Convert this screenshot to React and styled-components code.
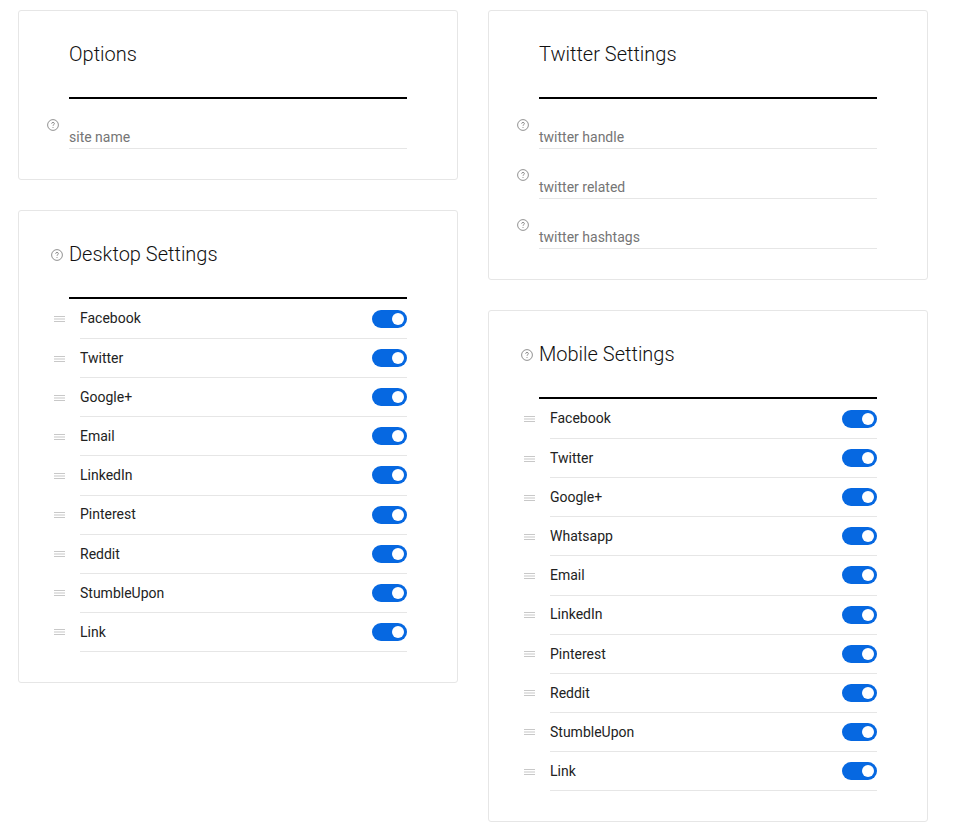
import React from 'react';
import styled, { createGlobalStyle } from 'styled-components';

const GlobalStyle = createGlobalStyle`
  html, body {
    margin: 0;
    padding: 0;
    background-color: #ffffff;
    font-family: Roboto, "Liberation Sans", sans-serif;
  }
  * {
    box-sizing: border-box;
  }
`;

const Page = styled.div`
  display: flex;
  gap: 30px;
  padding: 10px 18px;
  width: 953px;
`;

const Column = styled.div`
  display: flex;
  flex-direction: column;
  gap: 30px;
  width: 440px;
`;

const Card = styled.section`
  border: 1px solid #e6e6e6;
  border-radius: 3px;
  padding: 0 50px 30px;
`;

const Header = styled.div`
  display: flex;
  align-items: center;
  gap: 6px;
  height: 86px;
  margin-left: ${(p) => (p.$help ? '-18px' : '0')};
`;

const Title = styled.h2`
  margin: 0;
  font-size: 20px;
  font-weight: 300;
  line-height: 24px;
  color: #111111;
`;

const Rule = styled.div`
  height: 2px;
  background-color: #000000;
`;

const Field = styled.div`
  display: flex;
  align-items: flex-start;
  gap: 10px;
  margin-left: -22px;
  height: 50px;
`;

const HelpWrap = styled.span`
  display: flex;
  flex: none;
  width: 12px;
  height: 12px;
  margin-top: ${(p) => p.$top || 0}px;
`;

const FieldText = styled.div`
  flex: 1;
  height: 100%;
  border-bottom: 1px solid #e6e6e6;
  padding-top: 29px;
  font-size: 14px;
  line-height: 18px;
  color: #757575;
`;

const List = styled.div`
  display: flex;
  flex-direction: column;
`;

const Row = styled.div`
  display: flex;
  align-items: center;
  gap: 15px;
  margin-left: -15px;
  height: ${(p) => (p.$first ? '40px' : '39.14px')};
`;

const HandleIcon = styled.svg`
  flex: none;
  width: 11px;
  height: 6px;
`;

const RowBody = styled.div`
  flex: 1;
  display: flex;
  align-items: center;
  justify-content: space-between;
  height: 100%;
  border-bottom: 1px solid #e6e6e6;
  font-size: 14px;
  color: #222222;
`;

const RowLabel = styled.span`
  margin-bottom: 0.3px;
`;

const Toggle = styled.span`
  display: flex;
  align-items: center;
  justify-content: flex-end;
  width: 35px;
  height: 18px;
  padding-right: 3px;
  border-radius: 9px;
  background-color: #0668e1;

  &::after {
    content: '';
    width: 12px;
    height: 12px;
    border-radius: 50%;
    background-color: #ffffff;
  }
`;

const HelpIcon = () => (
  <svg width="12" height="12" viewBox="0 0 12 12" fill="none">
    <circle cx="6" cy="6" r="5.4" stroke="#757575" strokeWidth="0.8" />
    <path
      d="M4.6 4.7c0-.8.6-1.3 1.4-1.3s1.4.5 1.4 1.2c0 1-1.4 1.1-1.4 2.2"
      stroke="#757575"
      strokeWidth="0.8"
    />
    <circle cx="6" cy="8.4" r="0.5" fill="#757575" />
  </svg>
);

const Handle = () => (
  <HandleIcon viewBox="0 0 11 6">
    <rect y="0" width="11" height="1" fill="#c8c8c8" />
    <rect y="2.5" width="11" height="1" fill="#c8c8c8" />
    <rect y="5" width="11" height="1" fill="#c8c8c8" />
  </HandleIcon>
);

const desktopItems = ['Facebook', 'Twitter', 'Google+', 'Email', 'LinkedIn', 'Pinterest', 'Reddit', 'StumbleUpon', 'Link'];
const mobileItems = ['Facebook', 'Twitter', 'Google+', 'Whatsapp', 'Email', 'LinkedIn', 'Pinterest', 'Reddit', 'StumbleUpon', 'Link'];

const FieldCard = ({ title, fields }) => (
  <Card>
    <Header>
      <Title>{title}</Title>
    </Header>
    <Rule />
    {fields.map((name) => (
      <Field key={name}>
        <HelpWrap $top={20}>
          <HelpIcon />
        </HelpWrap>
        <FieldText>{name}</FieldText>
      </Field>
    ))}
  </Card>
);

const ToggleCard = ({ title, items }) => (
  <Card>
    <Header $help>
      <HelpWrap $top={2}>
        <HelpIcon />
      </HelpWrap>
      <Title>{title}</Title>
    </Header>
    <Rule />
    <List>
      {items.map((name, i) => (
        <Row key={name} $first={i === 0}>
          <Handle />
          <RowBody>
            <RowLabel>{name}</RowLabel>
            <Toggle />
          </RowBody>
        </Row>
      ))}
    </List>
  </Card>
);

const App = () => (
  <>
    <GlobalStyle />
    <Page>
      <Column>
        <FieldCard title="Options" fields={['site name']} />
        <ToggleCard title="Desktop Settings" items={desktopItems} />
      </Column>
      <Column>
        <FieldCard title="Twitter Settings" fields={['twitter handle', 'twitter related', 'twitter hashtags']} />
        <ToggleCard title="Mobile Settings" items={mobileItems} />
      </Column>
    </Page>
  </>
);

export default App;
